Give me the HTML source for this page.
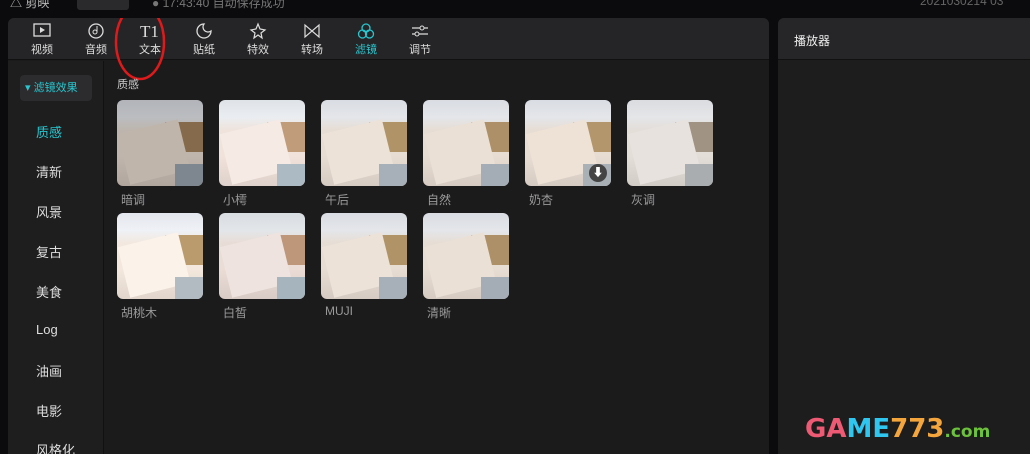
<!DOCTYPE html><html><head><meta charset="utf-8"><style>
*{margin:0;padding:0;box-sizing:border-box}
body{width:1030px;height:454px;background:#0b0b0d;font-family:"Liberation Sans","Noto Sans CJK SC",sans-serif;position:relative;overflow:hidden;color:#ccc}
.top{position:absolute;left:0;top:0;width:1030px;height:18px;font-size:12px;color:#888}
.panel{position:absolute;left:8px;top:18px;width:761px;height:436px;background:#1b1b1c;border-radius:6px 6px 0 0;overflow:hidden}
.tb{position:absolute;left:0;top:0;width:761px;height:42px;background:#252527;border-bottom:1px solid #111}
.ti{position:absolute;top:4px;width:40px;text-align:center;font-size:11px;color:#ddd}
.ti svg{display:block;margin:0 auto 1px}
.side{position:absolute;left:0;top:43px;width:96px;height:393px;border-right:1px solid #111;background:#1e1e1f}
.side div{position:absolute;left:28px;font-size:13px;color:#ddd}
.side .tag{position:absolute;left:12px;top:14px;width:72px;height:26px;background:#2c2c2e;border-radius:4px;color:#28c6cf;font-size:11px;line-height:26px;padding-left:5px;white-space:nowrap}
.th{position:absolute;width:86px;height:86px;border-radius:6px;overflow:hidden;background:linear-gradient(180deg,#d9dce2 0,#e4e6ea 20%,#e6ddd4 35%,#e8ddd3 65%,#d6cbc2 100%)}
.th i{position:absolute;display:block}
.lb{position:absolute;font-size:12px;color:#999}
.rp{position:absolute;left:778px;top:18px;width:252px;height:436px;background:#1d1d1e;border-radius:6px 0 0 0;overflow:hidden}
.rh{height:42px;background:#262628;border-bottom:1px solid #111;color:#eee;font-size:12px;padding:14px 0 0 16px}
</style></head><body>
<div class="top"><span style="position:absolute;left:10px;top:-6px;color:#bbb">△ 剪映</span><span style="position:absolute;left:77px;top:-6px;width:52px;height:16px;background:#2a2a2c;border-radius:3px"></span><span style="position:absolute;left:152px;top:-6px;color:#777">● 17:43:40 自动保存成功</span><span style="position:absolute;left:920px;top:-6px;color:#666">2021030214 03</span></div>
<div class="panel">
<div class="tb">
<div class="ti" style="left:14px"><svg width="20" height="18"><rect x="2" y="2" width="16" height="12" fill="none" stroke="#ddd" stroke-width="1.3"/><path d="M8 5l5 3-5 3z" fill="#ddd"/></svg>视频</div>
<div class="ti" style="left:68px"><svg width="20" height="18"><circle cx="10" cy="9" r="7" fill="none" stroke="#ddd" stroke-width="1.3"/><circle cx="9" cy="10" r="2" fill="none" stroke="#ddd"/><path d="M11 10V4" stroke="#ddd"/></svg>音频</div>
<div class="ti" style="left:122px"><svg width="24" height="18"><text x="2" y="15" font-family="Liberation Serif" font-size="17" fill="#ddd">T1</text></svg>文本</div>
<div class="ti" style="left:176px"><svg width="20" height="18"><path d="M10 2a7 7 0 1 0 7 7 5 5 0 0 1-7-7z" fill="none" stroke="#ddd" stroke-width="1.3"/></svg>贴纸</div>
<div class="ti" style="left:230px"><svg width="20" height="18"><path d="M10 2l2 5 5 1-4 3 1 5-4-3-4 3 1-5-4-3 5-1z" fill="none" stroke="#ddd" stroke-width="1.2"/></svg>特效</div>
<div class="ti" style="left:284px"><svg width="20" height="18"><path d="M3 3v12l14-12v12z" fill="none" stroke="#ddd" stroke-width="1.2"/></svg>转场</div>
<div class="ti" style="left:338px;color:#28c6cf"><svg width="20" height="18"><circle cx="10" cy="6" r="4" fill="none" stroke="#28c6cf" stroke-width="1.3"/><circle cx="6.5" cy="12" r="4" fill="none" stroke="#28c6cf" stroke-width="1.3"/><circle cx="13.5" cy="12" r="4" fill="none" stroke="#28c6cf" stroke-width="1.3"/></svg>滤镜</div>
<div class="ti" style="left:392px"><svg width="20" height="18"><path d="M2 6h16M2 12h16" stroke="#ddd" stroke-width="1.2"/><circle cx="12" cy="6" r="2" fill="#252527" stroke="#ddd"/><circle cx="7" cy="12" r="2" fill="#252527" stroke="#ddd"/></svg>调节</div>
<svg style="position:absolute;left:104px;top:-16px" width="56" height="80"><ellipse cx="28" cy="40" rx="24" ry="37" fill="none" stroke="#e0191b" stroke-width="2.5"/></svg>
</div>
<div class="side">
<div class="tag">▾ 滤镜效果</div>
<div style="top:61px;color:#28c6cf">质感</div><div style="top:101px">清新</div><div style="top:141px">风景</div><div style="top:181px">复古</div><div style="top:221px">美食</div><div style="top:261px">Log</div><div style="top:300px">油画</div><div style="top:340px">电影</div><div style="top:379px">风格化</div>
</div>
<div class="lb" style="left:109px;top:58px;color:#ccc;font-size:11px">质感</div>
<div id="thumbs"></div>
<div class="th" style="left:109px;top:82px;filter:brightness(.82) saturate(1.1)"><i style="left:48px;top:22px;width:38px;height:30px;background:#a08260"></i><i style="left:6px;top:26px;width:62px;height:52px;background:#e8ddd2;transform:rotate(-14deg)"></i><i style="left:58px;top:64px;width:28px;height:22px;background:#9aa4ae"></i></div>
<div class="th" style="left:211px;top:82px;filter:hue-rotate(-10deg) brightness(1.03)"><i style="left:48px;top:22px;width:38px;height:30px;background:#b49a72"></i><i style="left:6px;top:26px;width:62px;height:52px;background:#ece4dc;transform:rotate(-14deg)"></i><i style="left:58px;top:64px;width:28px;height:22px;background:#a9b4c0"></i></div>
<div class="th" style="left:313px;top:82px"><i style="left:48px;top:22px;width:38px;height:30px;background:#b09468"></i><i style="left:6px;top:26px;width:62px;height:52px;background:#ece2d8;transform:rotate(-14deg)"></i><i style="left:58px;top:64px;width:28px;height:22px;background:#a7b0b8"></i></div>
<div class="th" style="left:415px;top:82px"><i style="left:48px;top:22px;width:38px;height:30px;background:#ad9068"></i><i style="left:6px;top:26px;width:62px;height:52px;background:#ebe0d5;transform:rotate(-14deg)"></i><i style="left:58px;top:64px;width:28px;height:22px;background:#a4adb5"></i></div>
<div class="th" style="left:517px;top:82px"><i style="left:48px;top:22px;width:38px;height:30px;background:#b4966c"></i><i style="left:6px;top:26px;width:62px;height:52px;background:#eee2d7;transform:rotate(-14deg)"></i><i style="left:58px;top:64px;width:28px;height:22px;background:#a9b0b6"></i><span style="position:absolute;right:4px;bottom:4px;width:18px;height:18px;border-radius:50%;background:#444;z-index:2;color:#fff;font-size:11px;text-align:center;line-height:18px">⬇</span></div>
<div class="th" style="left:619px;top:82px;filter:saturate(.6)"><i style="left:48px;top:22px;width:38px;height:30px;background:#a89278"></i><i style="left:6px;top:26px;width:62px;height:52px;background:#e9e2db;transform:rotate(-14deg)"></i><i style="left:58px;top:64px;width:28px;height:22px;background:#a7adb2"></i></div>
<div class="th" style="left:109px;top:195px;filter:brightness(1.05)"><i style="left:48px;top:22px;width:38px;height:30px;background:#b09468"></i><i style="left:6px;top:26px;width:62px;height:52px;background:#efe6de;transform:rotate(-14deg)"></i><i style="left:58px;top:64px;width:28px;height:22px;background:#aab2b9"></i></div>
<div class="th" style="left:211px;top:195px;filter:hue-rotate(-15deg)"><i style="left:48px;top:22px;width:38px;height:30px;background:#b49a72"></i><i style="left:6px;top:26px;width:62px;height:52px;background:#ece4dc;transform:rotate(-14deg)"></i><i style="left:58px;top:64px;width:28px;height:22px;background:#a9b4c0"></i></div>
<div class="th" style="left:313px;top:195px"><i style="left:48px;top:22px;width:38px;height:30px;background:#b09468"></i><i style="left:6px;top:26px;width:62px;height:52px;background:#ece2d8;transform:rotate(-14deg)"></i><i style="left:58px;top:64px;width:28px;height:22px;background:#a7b0b8"></i></div>
<div class="th" style="left:415px;top:195px"><i style="left:48px;top:22px;width:38px;height:30px;background:#ad9068"></i><i style="left:6px;top:26px;width:62px;height:52px;background:#ebe0d5;transform:rotate(-14deg)"></i><i style="left:58px;top:64px;width:28px;height:22px;background:#a4adb5"></i></div>
<div class="lb" style="left:113px;top:173px">暗调</div><div class="lb" style="left:215px;top:173px">小樗</div><div class="lb" style="left:317px;top:173px">午后</div><div class="lb" style="left:419px;top:173px">自然</div><div class="lb" style="left:521px;top:173px">奶杏</div><div class="lb" style="left:623px;top:173px">灰调</div>
<div class="lb" style="left:113px;top:286px">胡桃木</div><div class="lb" style="left:215px;top:286px">白皙</div><div class="lb" style="left:317px;top:286px">MUJI</div><div class="lb" style="left:419px;top:286px">清晰</div>
</div>
<div class="rp"><div class="rh">播放器</div>
<div style="position:absolute;left:27px;top:396px;font-size:26px;font-weight:bold;letter-spacing:0px;font-family:'DejaVu Sans',sans-serif;white-space:nowrap"><span style="color:#ee5a73">GA</span><span style="color:#2fc6ef">ME</span><span style="color:#f4a53c">773</span><span style="color:#6cc23c;font-size:17px">.com</span></div>
</div>
</body></html>
